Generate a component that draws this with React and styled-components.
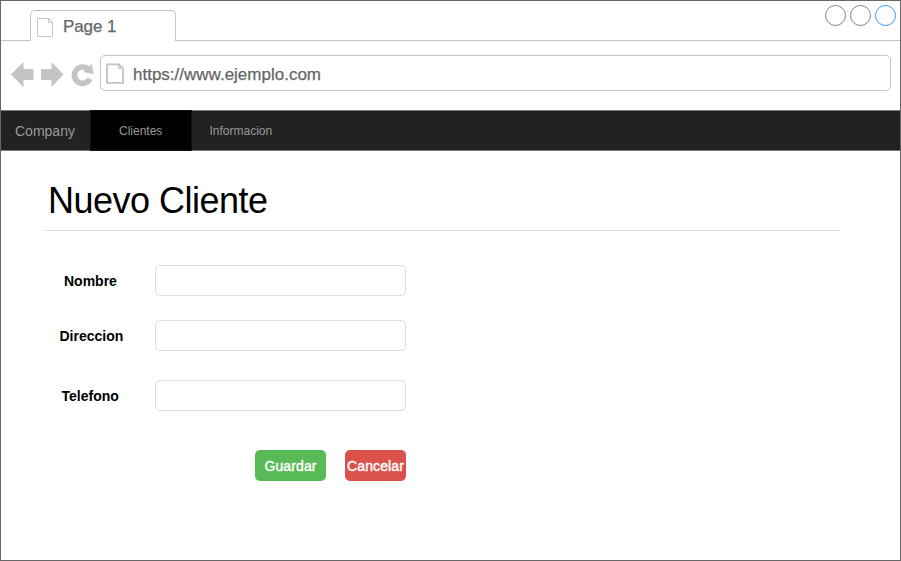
import React from "react";
import styled, { createGlobalStyle } from "styled-components";

const Global = createGlobalStyle`
  *, *::before, *::after { box-sizing: border-box; }
  body { margin: 0; background: #fff; font-family: "Liberation Sans", Arial, Helvetica, sans-serif; }
  svg { display: block; flex: none; }
`;

const Window = styled.div`
  width: 901px;
  height: 561px;
  border: 1px solid #666;
  background: #fff;
  overflow: hidden;
`;

const TabStrip = styled.div`
  display: flex;
  height: 40px;
`;

const StripStart = styled.div`
  width: 29px;
  border-bottom: 1px solid #c4c4c4;
`;

const Tab = styled.div`
  width: 146px;
  height: 31px;
  margin-top: 9px;
  padding: 1px 0 0 6px;
  display: flex;
  align-items: center;
  gap: 9px;
  border: 1px solid #c4c4c4;
  border-bottom: 0;
  border-radius: 5px 5px 0 0;
`;

const StripEnd = styled.div`
  flex: 1;
  display: flex;
  justify-content: flex-end;
  gap: 4px;
  padding: 4px 4px 0 0;
  border-bottom: 1px solid #c4c4c4;
`;

const WindowDot = styled.span`
  width: 21px;
  height: 21px;
  border: 1px solid ${(p) => p.$color};
  border-radius: 50%;
`;

const Text = styled.span`
  padding-top: ${(p) => p.$drop}px;
  font-size: 17px;
  line-height: 20px;
  letter-spacing: ${(p) => p.$track || 0}px;
  color: #666;
  -webkit-text-stroke: 0.25px #666;
  white-space: nowrap;
`;

const Toolbar = styled.div`
  display: flex;
  align-items: center;
  height: 36px;
  margin: 14px 9px 19px 10px;
`;

const NavIcons = styled.div`
  display: flex;
  width: 89px;
`;

const AddressBar = styled.div`
  flex: 1;
  height: 36px;
  padding-left: 5px;
  display: flex;
  align-items: center;
  gap: 9px;
  border: 1px solid #c4c4c4;
  border-radius: 5px;
`;

const Navbar = styled.nav`
  display: flex;
  height: 41px;
  background: #222;
  box-shadow: inset 0 1px #777, inset 0 -1px #777;
`;

const NavItem = styled.a`
  width: ${(p) => p.$width}px;
  padding-left: ${(p) => p.$inset}px;
  font-size: ${(p) => p.$size || 12}px;
  line-height: 43px;
  color: #999;
  ${(p) => p.$active && `background: #000; border: 1px solid #111; line-height: 41px;`}
`;

const Content = styled.main`
  margin: 0 60px 0 44px;
`;

const Title = styled.h1`
  height: 80px;
  margin: 0;
  padding: 30px 0 0 3px;
  font-size: 36px;
  font-weight: 400;
  line-height: 40px;
  letter-spacing: -0.5px;
  color: #000;
  border-bottom: 1px solid #ddd;
`;

const Form = styled.form`
  width: 361px;
  padding-top: 34px;
`;

const Field = styled.label`
  display: flex;
  align-items: center;
  height: 31px;
  margin-bottom: ${(p) => p.$gap}px;
`;

const FieldName = styled.span`
  width: 110px;
  padding-left: ${(p) => p.$inset}px;
  font-size: 14px;
  font-weight: 700;
  color: #000;
`;

const Input = styled.input`
  width: 251px;
  height: 31px;
  border: 1px solid #ddd;
  border-radius: 5px;
  background: #fff;
  outline: none;
`;

const Actions = styled.div`
  display: flex;
  justify-content: flex-end;
  gap: 19px;
`;

const Button = styled.button`
  width: ${(p) => p.$width}px;
  height: 31px;
  padding: 1px 0 0;
  border: 0;
  border-radius: 5px;
  background: ${(p) => p.$color};
  color: #fff;
  font: 14px/30px "Liberation Sans", Arial, sans-serif;
  letter-spacing: 0.1px;
  -webkit-text-stroke: 0.4px #fff;
  white-space: nowrap;
`;

const TabPageIcon = () => (
  <svg width="17" height="20" viewBox="0 0 17 20" fill="none" stroke="#c4c4c4">
    <path d="M.5 1.5H11.5L15.5 5.5V19.5H.5Z M11.5 1.5V5.5H15.5" />
  </svg>
);

const AddressPageIcon = () => (
  <svg width="18" height="22" viewBox="0 0 18 22" fill="none" stroke="#c4c4c4" strokeWidth="1.8">
    <path d="M1 2.3H13L17 6.3V20.8H1Z" />
    <path d="M12.7 2.3V6.5H17" strokeWidth="1.2" />
  </svg>
);

export default function App() {
  return (
    <>
      <Global />
      <Window>
        <TabStrip>
          <StripStart />
          <Tab>
            <TabPageIcon />
            <Text $drop={0} $track={-0.1}>Page 1</Text>
          </Tab>
          <StripEnd>
            <WindowDot $color="#808080" />
            <WindowDot $color="#808080" />
            <WindowDot $color="#3399ff" />
          </StripEnd>
        </TabStrip>
        <Toolbar>
          <NavIcons>
            <svg width="89" height="36" viewBox="11 55 89 36" fill="#c4c4c4">
              <path d="M11 74.5L23.5 62V69H33.5V80H23.5V87Z" />
              <path d="M63.5 74.5L51.5 62V69H41V80H51.5V87Z" />
              <path d="M90 78.8A8.2 8.2 0 1 1 88.5 69.4" fill="none" stroke="#c4c4c4" strokeWidth="5.6" />
              <path d="M91.8 63.8L93.6 74.3L83.5 72Z" />
            </svg>
          </NavIcons>
          <AddressBar>
            <AddressPageIcon />
            <Text $drop={3}>https://www.ejemplo.com</Text>
          </AddressBar>
        </Toolbar>
        <Navbar>
          <NavItem $width={89} $inset={14} $size={14}>Company</NavItem>
          <NavItem $width={102} $inset={28} $active>Clientes</NavItem>
          <NavItem $width={100} $inset={17.5}>Informacion</NavItem>
        </Navbar>
        <Content>
          <Title>Nuevo Cliente</Title>
          <Form>
            <Field $gap={24}><FieldName $inset={19}>Nombre</FieldName><Input /></Field>
            <Field $gap={29}><FieldName $inset={14.5}>Direccion</FieldName><Input /></Field>
            <Field $gap={39}><FieldName $inset={16.5}>Telefono</FieldName><Input /></Field>
            <Actions>
              <Button type="button" $width={71} $color="#58b957">Guardar</Button>
              <Button type="button" $width={61} $color="#db524c">Cancelar</Button>
            </Actions>
          </Form>
        </Content>
      </Window>
    </>
  );
}
